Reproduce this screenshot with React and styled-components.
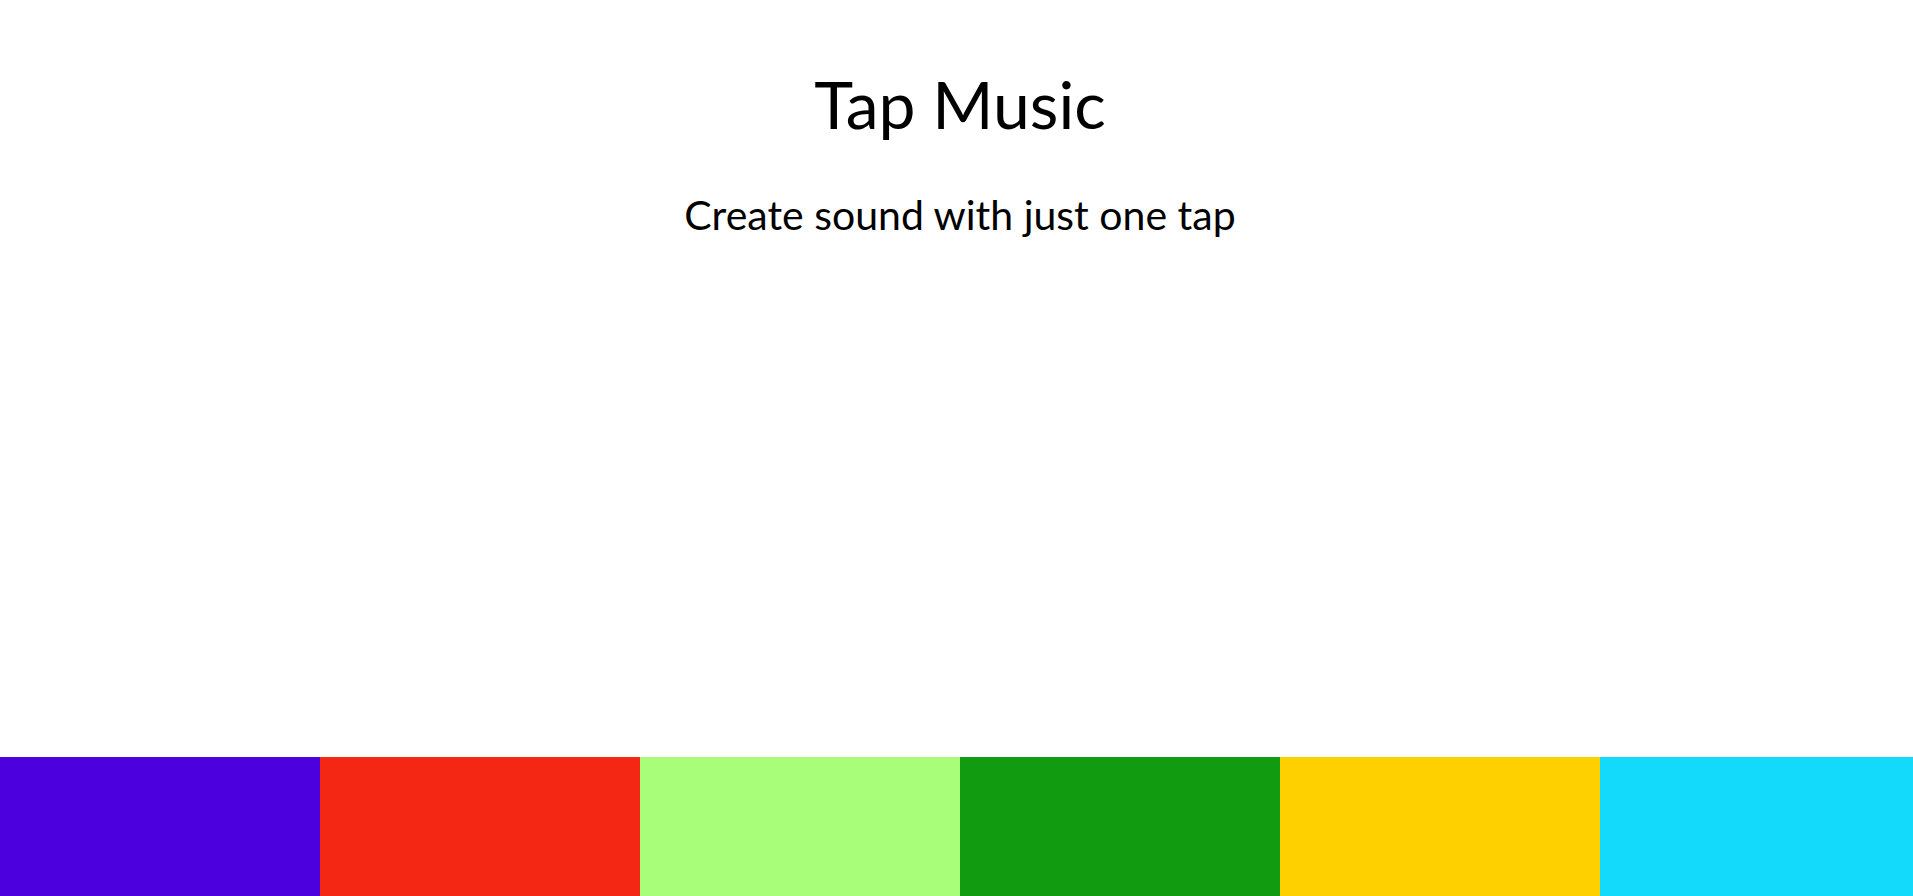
import { createGlobalStyle } from "styled-components";
import styled from "styled-components";

const GlobalStyle = createGlobalStyle`
  * {
    margin: 0;
    padding: 0;
    box-sizing: border-box;
  }
  html, body {
    overflow: hidden;
    background: #ffffff;
    font-family: "Lato", "Noto Sans", sans-serif;
  }
`;

const Section = styled.section`
  width: 1920px;
  height: 100vh;
  display: flex;
  flex-direction: column;
  justify-content: space-between;
  align-items: center;
`;

const Header = styled.header`
  width: 100%;
  text-align: center;
  color: #000;
  padding-top: 64px;
`;

const Title = styled.h1`
  font-size: 66px;
  font-weight: 400;
  line-height: 80px;
`;

const Subtitle = styled.p`
  font-size: 41px;
  font-weight: 400;
  line-height: 48px;
  margin-top: 47px;
`;

const Pads = styled.div`
  display: flex;
  width: 100%;
`;

const Pad = styled.div`
  width: 320px;
  height: 139px;
  background: ${(p) => p.color};
  cursor: pointer;
`;

const colors = ["#4c00de", "#f32714", "#a8fe79", "#119b10", "#fed000", "#13d9fa"];

export default function App() {
  return (
    <>
      <GlobalStyle />
      <Section>
        <Header>
          <Title>Tap Music</Title>
          <Subtitle>Create sound with just one tap</Subtitle>
        </Header>
        <Pads>
          {colors.map((c) => (
            <Pad key={c} color={c} />
          ))}
        </Pads>
      </Section>
    </>
  );
}
